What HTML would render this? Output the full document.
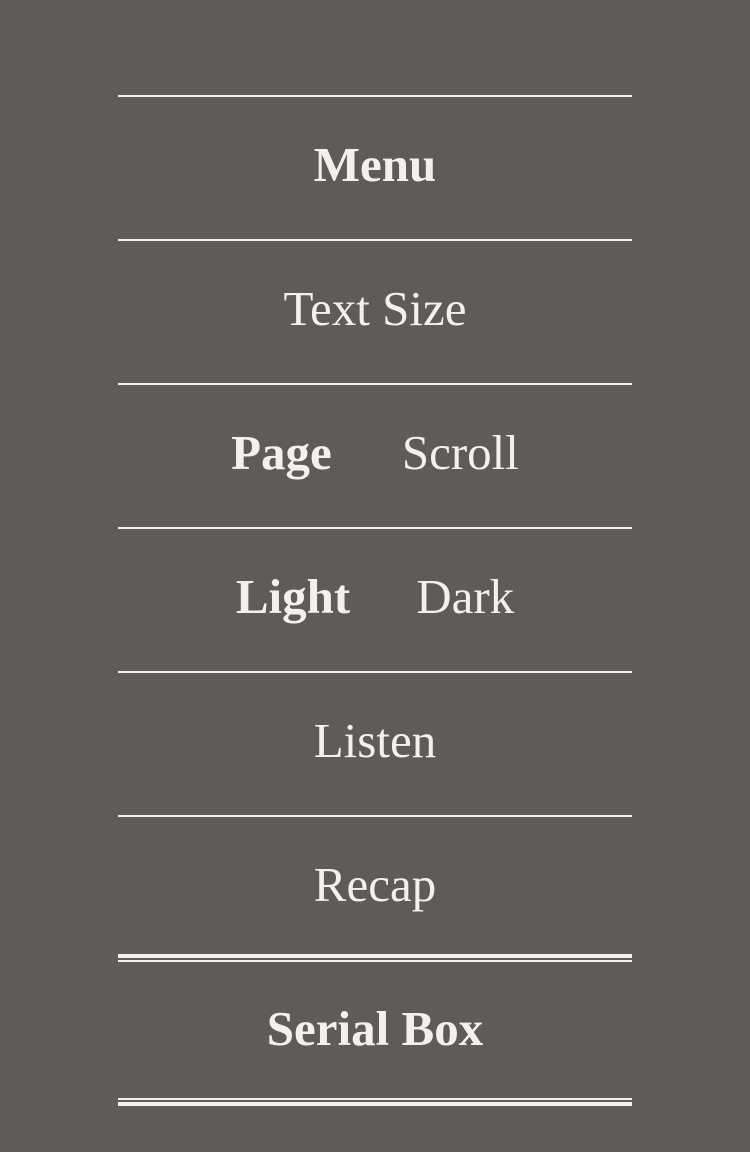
<!DOCTYPE html>
<html><head><meta charset="utf-8"><style>
html,body{margin:0;padding:0;}
body{width:750px;height:1152px;background:#5f5b58;position:relative;overflow:hidden;font-family:"Liberation Serif",serif;color:#f3f1ee;}
.l{position:absolute;left:118px;width:514px;background:#f3f1ee;}
.t{position:absolute;left:0;width:750px;text-align:center;font-size:49px;line-height:60px;}
b{font-weight:bold;}
.t span{display:inline-block;}
</style></head><body>
<div class="l" style="top:95px;height:2px"></div>
<div class="l" style="top:239px;height:2px"></div>
<div class="l" style="top:383px;height:2px"></div>
<div class="l" style="top:527px;height:2px"></div>
<div class="l" style="top:671px;height:2px"></div>
<div class="l" style="top:815px;height:2px"></div>
<div class="l" style="top:954px;height:4px"></div>
<div class="l" style="top:960px;height:2px"></div>
<div class="l" style="top:1098px;height:2px"></div>
<div class="l" style="top:1102px;height:4px"></div>

<div class="t" style="top:135px"><b>Menu</b></div>
<div class="t" style="top:279px">Text Size</div>
<div class="t" style="top:423px"><b><span style="margin-right:70px">Page</span></b><span>Scroll</span></div>
<div class="t" style="top:567px"><b><span style="margin-right:66px">Light</span></b><span>Dark</span></div>
<div class="t" style="top:711px">Listen</div>
<div class="t" style="top:855px">Recap</div>
<div class="t" style="top:999px"><b>Serial Box</b></div>
</body></html>
